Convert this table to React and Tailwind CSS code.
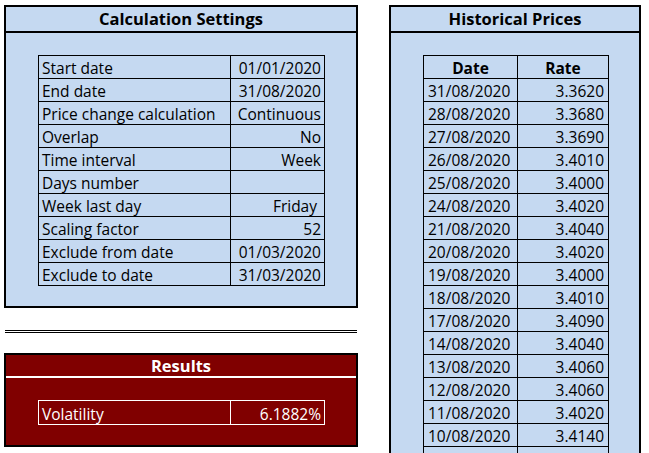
import React from 'react';

const settings = [
    ['Start date', '01/01/2020', 'pr-[3px]'],
    ['End date', '31/08/2020', 'pr-[3px]'],
    ['Price change calculation', 'Continuous', 'pr-[3px]'],
    ['Overlap', 'No', 'pr-[3px]'],
    ['Time interval', 'Week', 'pr-[3px]'],
    ['Days number', '', 'pr-[3px]'],
    ['Week last day', 'Friday', 'pr-[7px]'],
    ['Scaling factor', '52', 'pr-[3px]'],
    ['Exclude from date', '01/03/2020', 'pr-[3px]'],
    ['Exclude to date', '31/03/2020', 'pr-[3px]'],
];

const prices = [
    ['31/08/2020', '3.3620'],
    ['28/08/2020', '3.3680'],
    ['27/08/2020', '3.3690'],
    ['26/08/2020', '3.4010'],
    ['25/08/2020', '3.4000'],
    ['24/08/2020', '3.4020'],
    ['21/08/2020', '3.4040'],
    ['20/08/2020', '3.4020'],
    ['19/08/2020', '3.4000'],
    ['18/08/2020', '3.4010'],
    ['17/08/2020', '3.4090'],
    ['14/08/2020', '3.4040'],
    ['13/08/2020', '3.4060'],
    ['12/08/2020', '3.4060'],
    ['11/08/2020', '3.4020'],
    ['10/08/2020', '3.4140'],
    ['07/08/2020', '3.4150'],
];

const font = { fontFamily: '"Open Sans", Lato, sans-serif' };

export default function App() {
    return (
        <div className="h-[453px] w-[649px] overflow-hidden bg-white text-black text-[15.5px] leading-none" style={font}>
            <div className="flex items-start pt-[5px] pl-[4px]">
                {/* colonne gauche */}
                <div className="flex w-[354px] flex-col">
                    <div className="h-[303px] border-2 border-black bg-[#c5d9f1]">
                        <div className="flex h-[26px] items-center justify-center border-b-2 border-black pt-[1px] text-[16.5px] font-bold">
                            Calculation Settings
                        </div>
                        <div className="pl-[32px] pt-[22px]">
                            <div className="grid w-[287px] grid-cols-[192px_94px] border-l border-t border-black">
                                {settings.map(([label, value, pad]) => (
                                    <React.Fragment key={label}>
                                        <div className="flex h-[23px] items-center whitespace-nowrap border-b border-r border-black pl-[3px] pt-[4px]">{label}</div>
                                        <div className={`flex h-[23px] items-center justify-end whitespace-nowrap border-b border-r border-black pt-[4px] ${pad}`}>{value}</div>
                                    </React.Fragment>
                                ))}
                            </div>
                        </div>
                    </div>

                    <div className="mt-[22px] ml-[1px] h-[3px] w-[352px] border-y border-black"></div>

                    <div className="mt-[20px] h-[94px] border-2 border-black bg-[#800000] text-white">
                        <div className="flex h-[23px] items-center justify-center border-b-2 border-white pt-[1px] text-[16.5px] font-bold">
                            Results
                        </div>
                        <div className="pl-[32px] pt-[22px]">
                            <div className="grid w-[287px] grid-cols-[192px_94px] border-l border-t border-white">
                                <div className="flex h-[24px] items-center border-b border-r border-white pl-[3px] pt-[4px]">Volatility</div>
                                <div className="flex h-[24px] items-center justify-end border-b border-r border-white pr-[3px] pt-[4px]">6.1882%</div>
                            </div>
                        </div>
                    </div>
                </div>

                {/* colonne droite */}
                <div className="ml-[31px] h-[500px] w-[252px] border-2 border-black bg-[#c5d9f1]">
                    <div className="flex h-[26px] items-center justify-center border-b-2 border-black pt-[1px] text-[16.5px] font-bold">
                        Historical Prices
                    </div>
                    <div className="pl-[32px] pt-[22px]">
                        <div className="grid w-[186px] grid-cols-[94px_91px] border-l border-t border-black">
                            <div className="flex h-[23px] items-center justify-center border-b border-r border-black pt-[4px] font-bold">Date</div>
                            <div className="flex h-[23px] items-center justify-center border-b border-r border-black pt-[4px] font-bold">Rate</div>
                            {prices.map(([d, r]) => (
                                <React.Fragment key={d}>
                                    <div className="flex h-[23px] items-center border-b border-r border-black pl-[4px] pt-[4px]">{d}</div>
                                    <div className="flex h-[23px] items-center justify-end border-b border-r border-black pr-[4px] pt-[4px]">{r}</div>
                                </React.Fragment>
                            ))}
                        </div>
                    </div>
                </div>
            </div>
        </div>
    );
}
